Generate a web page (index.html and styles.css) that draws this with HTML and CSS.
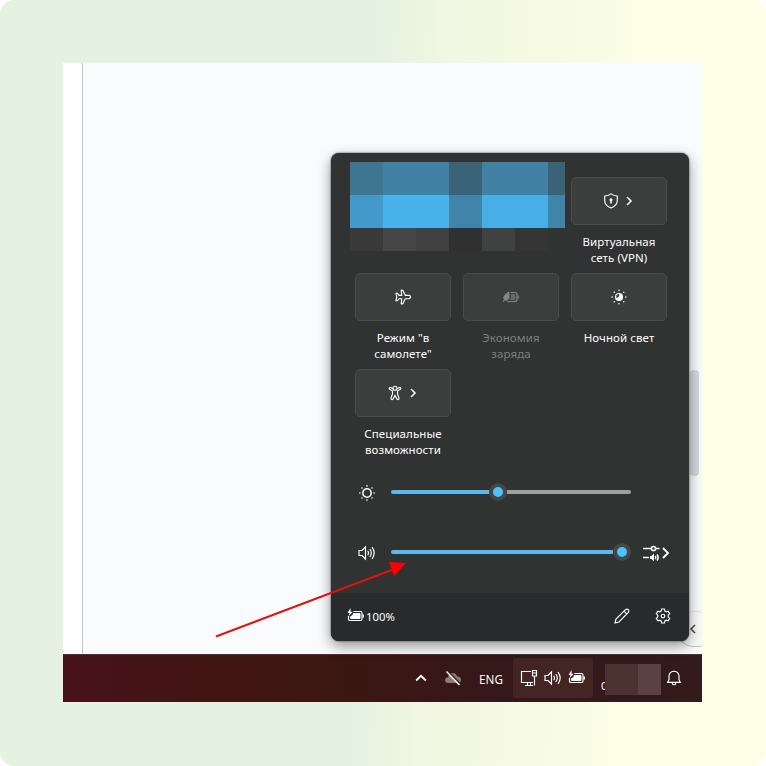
FILE: index.html
```html
<!DOCTYPE html>
<html lang="ru">
<head>
<meta charset="utf-8">
<title>Быстрые настройки</title>
<link rel="stylesheet" href="styles.css">
</head>
<body>
<svg class="defs" width="0" height="0">
  <symbol id="speaker" viewBox="0 0 18 16">
    <path d="M1 5.500h3L7.500 2v12L4 10.500H1z"/><path d="M9.700 5.800q1.500 2.200 0 4.400M11.800 4q3 4 0 8M14 2.200q4.400 5.800 0 11.600"/>
  </symbol>
  <symbol id="battery" viewBox="0 0 18 16">
    <path d="M6.500 3.500h7q1.500 0 1.500 1.500v6q0 1.500-1.500 1.500H3q-1.500 0-1.500-1.500V8"/>
    <path class="solid" d="M6 5h6.500q1 0 1 1v4q0 1-1 1H4q-1 0-1-1V8.500L5.500 7zM15.500 6.500h1.500v3h-1.500zM3.500 0 .5 5h2L1.500 8.300 5.700 3.700H3.500z"/>
  </symbol>
  <symbol id="chevron" viewBox="0 0 8 10"><path d="M2 1l4 4-4 4"/></symbol>
</svg>
<main class="backdrop">
  <section class="screen">
    <div class="window">
      <div class="gutter"></div>
      <div class="page"></div>
      <div class="scrollbar"></div>
      <div class="side-tab"><svg class="icon" width="8" height="10" viewBox="0 0 8 10"><path d="M6 1 2 5l4 4"/></svg></div>
    </div>

    <div class="panel">
      <div class="tiles">
        <div class="tile tile-vpn">
          <div class="button paired">
            <svg class="icon" width="16" height="16" viewBox="0 0 16 16"><path d="M8 .9Q10.500 2.900 14.300 3v4.500q0 5-6.300 7.500-6.300-2.500-6.300-7.500V3Q5.500 2.900 8 .9z"/><circle class="solid" cx="8" cy="6.800" r="1.500"/><path class="bold" d="M8 7v3.500"/></svg>
            <svg class="icon chevron" width="8" height="10"><use href="#chevron"/></svg>
          </div>
          <div class="label">Виртуальная<br>сеть (VPN)</div>
        </div>
        <div class="tile">
          <div class="button">
            <svg class="icon" width="16" height="16" viewBox="0 0 16 16"><path d="M6.200 1.300q.9-.7 1.700.2L10.300 6.300H14q1.500.2 1.500 1.700T14 9.700h-3.700L7.900 14.500q-.8.9-1.700.2L6.700 9.700H4L2.500 11.700H1L1.700 8 1 4.300h1.500L4 6.300h2.700z"/></svg>
          </div>
          <div class="label">Режим "в<br>самолете"</div>
        </div>
        <div class="tile disabled">
          <div class="button">
            <svg class="icon" width="18" height="16" viewBox="0 0 18 16"><path d="M8.500 3.500H13q2 0 2 2v5q0 2-2 2H5.500"/><path class="solid" d="M7 2.500q1.500 5.500-.5 8-1.500 1.800-3.800.8L1.500 13l-.8-.5 1.200-1.800Q.4 8.500 2.500 6 4.500 3.800 7 2.500zM15.500 6.500h1.300v3h-1.300z"/><path class="dim" d="M9 5h3.500q1 0 1 1v4q0 1-1 1H7.500Q9.500 8.500 9 5z"/></svg>
          </div>
          <div class="label">Экономия<br>заряда</div>
        </div>
        <div class="tile">
          <div class="button">
            <svg class="icon" width="16" height="16" viewBox="0 0 16 16"><circle class="solid" cx="8" cy="8" r="4"/><path class="moon" d="M8.300 5.200q.4 3.200-3 3.800Q4.700 6 6.500 5.200q1-.5 1.800 0z"/><path class="rays" d="M8 1.200h.01M8 14.800h.01M1.200 8h.01M14.800 8h.01M3.300 3.300h.01M12.700 3.300h.01M3.300 12.700h.01M12.700 12.700h.01"/></svg>
          </div>
          <div class="label">Ночной свет</div>
        </div>
        <div class="tile">
          <div class="button paired">
            <svg class="icon" width="16" height="16" viewBox="0 0 16 16"><circle cx="8" cy="3.200" r="2"/><path d="M6 3.800 3.700 2.600Q2.200 2.200 2.200 3.500q0 .5.500.8L5.500 6v3L4 13q-.2 1.500 1 1.700.8 0 1.200-1L8 10.500l1.800 3.200q.4 1 1.200 1 1.200-.2 1-1.700L10.500 9V6l2.800-1.700q.5-.3.500-.8 0-1.300-1.500-.9L10 3.800"/></svg>
            <svg class="icon chevron" width="8" height="10"><use href="#chevron"/></svg>
          </div>
          <div class="label">Специальные<br>возможности</div>
        </div>
      </div>

      <div class="slider-row">
        <svg class="icon" width="16" height="16" viewBox="0 0 16 16"><circle class="bold" cx="8" cy="8" r="4.200"/><path class="rays" d="M8 .9h.01M8 15.100h.01M.9 8h.01M15.100 8h.01M3 3h.01M13 3h.01M3 13h.01M13 13h.01"/></svg>
        <div class="slider brightness"><div class="fill"></div><div class="thumb"></div><div class="rest"></div></div>
      </div>
      <div class="slider-row">
        <svg class="icon speaker" width="18" height="16"><use href="#speaker"/></svg>
        <div class="slider volume"><div class="fill"></div><div class="thumb"></div></div>
        <svg class="icon mixer" width="27" height="17" viewBox="0 0 27 17"><path class="bold" d="M0 3.500h8M13 3.500h3.500M0 12.500h6"/><path class="heavy" d="M20 3l5 5-5 5"/><circle class="bold" cx="10.500" cy="3.500" r="2.100"/><path class="solid" d="M7 11h1.500L11 8.500v8L8.500 14H7z"/><path class="bold" d="M12.300 11q1 1.500 0 3M14 9.500q2.300 3 0 6"/></svg>
      </div>

      <div class="panel-footer">
        <svg class="icon" width="18" height="16"><use href="#battery"/></svg>
        <span class="percent">100%</span>
        <svg class="icon edit" width="16" height="16" viewBox="0 0 16 16"><path d="M1 15l1-4L11.500 1.700q1.400-1.200 2.700 0 1.300 1.300.1 2.700L5 14zM10 3.200 12.800 6"/></svg>
        <svg class="icon" width="16" height="16" viewBox="0 0 16 16"><path d="M6.600 1h2.800l.5 2.100 1.200.7 2.100-.6L14.700 5.600 13.200 7.200v1.600l1.500 1.600-1.500 2.400-2.100-.6-1.200.7-.5 2.100H6.600l-.5-2.100-1.200-.7-2.100.6L1.300 10.400 2.800 8.800V7.200L1.300 5.600 2.800 3.200l2.100.6 1.200-.7z"/><circle cx="8" cy="8" r="1.800"/></svg>
      </div>

      <div class="mosaic">
        <i class="m1"></i><i class="m2"></i><i class="m2"></i><i class="m3"></i><i class="m2"></i><i class="m2"></i><i class="m3"></i>
        <i class="m4"></i><i class="m5"></i><i class="m5"></i><i class="m6"></i><i class="m7"></i><i class="m7"></i><i class="m6"></i>
        <i class="m8"></i><i class="m9"></i><i class="m10"></i><i class="m11"></i><i class="m12"></i><i class="m13"></i><i></i>
      </div>
    </div>

    <div class="taskbar">
      <svg class="icon up" width="12" height="8" viewBox="0 0 12 8"><path class="heavy" d="M1.200 6.500 6 1.800l4.800 4.700"/></svg>
      <svg class="icon cloud" width="18" height="16" viewBox="0 0 18 16"><path class="cloud-fill" d="M4 13Q1 12.800 1 10q.2-2.600 3-2.800Q5 3.200 8.500 3q3.600.2 4.700 3.500Q17 6.700 17 10q-.2 2.800-3 3z"/><path class="cut" d="M3.800 1.300l13 13.500"/><path class="bold" d="M2.500 1.500l13 13.500"/></svg>
      <span class="lang">ENG</span>
      <div class="tray">
        <svg class="icon" width="18" height="18" viewBox="0 0 18 18"><path d="M11 2.500H1.500v11H13M5 16.500h8M7.500 13.500v3M10.500 13.500v3"/><path d="M12.500 1.500h4V7h-4zM12.500 4h4M14.500 7v9.500"/></svg>
        <svg class="icon" width="18" height="16"><use href="#speaker"/></svg>
        <svg class="icon" width="18" height="16"><use href="#battery"/></svg>
      </div>
      <div class="clock"><span class="digit">0</span><div class="cover"><i></i><i></i></div></div>
      <svg class="icon bell" width="16" height="16" viewBox="0 0 16 16"><path d="M1.700 12.300 3 9.500V6q.3-4.500 5-4.800 4.700.3 5 4.800v3.500l1.300 2.800zM6 12.500q.3 2.200 2 2.200t2-2.200"/></svg>
    </div>

    <svg class="pointer" width="192" height="78" viewBox="0 0 192 78"><path d="M1 74.500 178 7.500"/><path class="head" d="M174 0 191 1 179 14z"/></svg>
  </section>
</main>
</body>
</html>
```

FILE: styles.css
```css
* { box-sizing: border-box; }
body {
  margin: 0;
  background: #fff;
  font-family: "Noto Sans", "Open Sans", sans-serif;
}
.defs { position: absolute; }
.backdrop {
  width: 766px;
  height: 766px;
  padding: 63px 64px 64px 63px;
  border-radius: 14px;
  background: linear-gradient(92deg, #e5f1e1 0%, #e5f2e1 48%, #f1f7e2 57%, #f8fbe3 71%, #fdffe7 86%);
}
.screen {
  position: relative;
  width: 639px;
  height: 639px;
  display: flex;
  flex-direction: column;
}
.window {
  position: relative;
  flex: 1;
  display: flex;
  overflow: hidden;
  background: #fafbfd;
}
.gutter { width: 20px; background: #fff; border-right: 1px solid #c2c3c4; }
.page { flex: 1; }
.scrollbar {
  position: absolute;
  left: 627px;
  top: 307px;
  width: 9px;
  height: 106px;
  border-radius: 4px;
  background: #d6d6df;
}
.side-tab {
  position: absolute;
  left: 613px;
  top: 548px;
  width: 40px;
  height: 36px;
  padding: 12px 0 0 12px;
  border: 1px solid #c4c4c7;
  border-top-color: #e6e6e8;
  border-radius: 18px;
  background: #fafafb;
  line-height: 0;
}
.side-tab .icon { stroke: #444; stroke-width: 1.5; }

.icon { display: block; flex: none; fill: none; stroke: #fff; stroke-width: 1.15; }
.solid { fill: #fff; stroke: none; }
.bold { stroke-width: 1.5; }
.heavy { stroke-width: 1.8; }
.rays { stroke-width: 1.6; stroke-linecap: round; }
.moon { fill: #3c3d3d; stroke: none; }
.chevron { stroke-width: 1.5; }

.panel {
  position: absolute;
  left: 268px;
  top: 90px;
  width: 358px;
  height: 488px;
  display: flex;
  flex-direction: column;
  border-radius: 8px;
  background: #313232;
  color: #fff;
  box-shadow: 0 0 2px rgba(0,0,0,.75), 0 5px 14px rgba(0,0,0,.42);
}
.tiles {
  height: 309px;
  padding: 24px 22px 0 24px;
  display: grid;
  grid-template-columns: repeat(3, 96px);
  grid-auto-rows: 96px;
  column-gap: 12px;
}
.tile-vpn { grid-column: 3; }
.button {
  height: 48px;
  display: flex;
  align-items: center;
  justify-content: center;
  gap: 6px;
  border: 1px solid #4a4b4b;
  border-radius: 5px;
  background: #3c3d3d;
}
.paired { padding-right: 2px; }
.label {
  margin-top: 9px;
  font-size: 11.500px;
  line-height: 16px;
  letter-spacing: .08px;
  text-align: center;
  white-space: nowrap;
}
.disabled .label { color: #7d7e7e; }
.disabled .icon { stroke: #858686; }
.disabled .solid { fill: #858686; }
.dim { fill: #666767; stroke: none; }
.slider-row {
  height: 60px;
  padding-left: 28px;
  display: flex;
  align-items: center;
}
.slider-row > .icon { position: relative; top: 1px; }
.slider-row > .speaker { left: -1px; }
.slider { width: 240px; margin-left: 16px; display: flex; align-items: center; }
.volume { margin-left: 14px; }
.fill { height: 4px; border-radius: 2px 0 0 2px; background: #5cb9ed; }
.brightness .fill { width: 98px; }
.volume .fill { width: 222px; }
.rest { flex: 1; height: 4px; border-radius: 0 2px 2px 0; background: #9f9f9f; }
.thumb { width: 18px; height: 18px; border: 4px solid #454646; border-radius: 50%; background: #4cc2ff; }
.mixer { margin-left: 12px; }
.panel-footer {
  height: 48px;
  margin-top: auto;
  padding: 0 18px 3px 16px;
  display: flex;
  align-items: center;
  border-top: 1px solid #292a2b;
  border-radius: 0 0 8px 8px;
  background: #282a2b;
}
.percent { margin: 2px 0 0 1px; font-size: 11.300px; line-height: 16px; }
.edit { margin: 0 25px 0 auto; }
.mosaic {
  position: absolute;
  left: 19px;
  top: 9px;
  display: grid;
  grid-template-columns: repeat(6, 33px) 17px;
  grid-template-rows: 33px 33px 23px;
}
.m1 { background: #3f7591; }
.m2 { background: #4182a4; }
.m3 { background: #3b6378; }
.m4 { background: #439aca; }
.m5 { background: #49b2eb; }
.m6 { background: #4184aa; }
.m7 { background: #47aee6; }
.m8 { background: #393939; }
.m9 { background: #464646; }
.m10 { background: #404040; }
.m11 { background: #303030; }
.m12 { background: #404241; }
.m13 { background: #353535; }

.taskbar {
  height: 48px;
  padding: 0 20px 1px 0;
  display: flex;
  align-items: center;
  justify-content: flex-end;
  border-top: 1px solid #4b3533;
  background: linear-gradient(90deg, #48131a 0%, #421414 22%, #3a1612 45%, #35181a 70%, #321b1a 100%);
  color: #fff;
}
.up { margin-right: 17px; }
.cloud { margin-right: 17px; }
.cloud-fill { fill: #8d7b79; stroke: none; }
.cut { stroke: #3a1715; stroke-width: 2; }
.lang { margin: 2px 10px 0 0; font-size: 11.700px; line-height: 16px; }
.tray {
  width: 80px;
  height: 40px;
  padding: 0 0 1px 7px;
  display: flex;
  align-items: center;
  gap: 6px;
  border-radius: 4px;
  background: #432524;
}
.clock { width: 68px; height: 31px; margin: 3px 5px 0 0; display: flex; justify-content: flex-end; }
.digit { width: 4px; height: 17px; margin-top: 13px; font-size: 11.500px; line-height: 17px; }
.cover { position: relative; display: flex; width: 56px; height: 31px; }
.cover i { width: 33px; background: #4c3332; }
.cover i + i { width: 23px; background: #594241; }

.pointer { position: absolute; left: 152px; top: 499px; fill: none; stroke: #e01212; stroke-width: 2; }
.pointer .head { fill: #f00; stroke: none; }
```
